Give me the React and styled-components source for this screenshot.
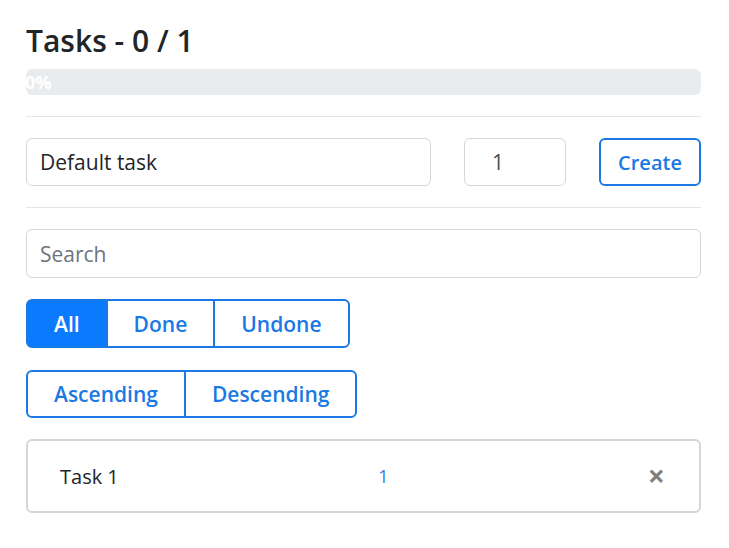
import React from "react";
import styled, { createGlobalStyle } from "styled-components";

const Global = createGlobalStyle`
  html, body { margin: 0; padding: 0; background: #fff; }
  body { font-family: "Open Sans", "Noto Sans", sans-serif; color: #212529; }
  * { box-sizing: border-box; }
`;

const Page = styled.div`
  width: 729px;
  padding: 23px 0 0 26px;
`;

const Container = styled.div`
  width: 675px;
  display: flex;
  flex-direction: column;
`;

const Title = styled.h3`
  margin: 0 0 10px;
  font-size: 30px;
  line-height: 36px;
  font-weight: 600;
  color: #212529;
`;

const Progress = styled.div`
  height: 26px;
  border-radius: 6px;
  background: #e9ecef;
  display: flex;
  align-items: center;
  overflow: hidden;
`;

const ProgressLabel = styled.span`
  color: #fff;
  font-size: 18px;
  font-weight: 700;
  line-height: 1;
  margin-left: -1px;
`;

const Rule = styled.hr`
  margin: 21px 0;
  border: 0;
  border-top: 1px solid #e2e4e7;
  height: 0;
  width: 100%;
`;

const Row = styled.div`
  display: flex;
  gap: 33px;
`;

const Input = styled.input`
  display: block;
  height: ${(p) => p.$h || 48}px;
  flex: none;
  width: ${(p) => p.$w || "100%"};
  border: 1px solid #d3d7db;
  border-radius: 6px;
  padding: 0 ${(p) => p.$px || 13}px;
  font-family: inherit;
  font-size: 21px;
  color: ${(p) => (p.$muted ? "#495057" : "#212529")};
  background: #fff;
  outline: none;
  &::placeholder { color: #6c757d; }
  -moz-appearance: textfield;
  &::-webkit-inner-spin-button, &::-webkit-outer-spin-button { -webkit-appearance: none; margin: 0; }
`;

const Button = styled.button`
  height: 48px;
  width: ${(p) => p.$w || "auto"};
  border: 2px solid #1b79e3;
  border-radius: 6px;
  background: #fff;
  color: #1b79e3;
  font-family: inherit;
  font-size: 20px;
  font-weight: 600;
  padding: 0;
`;

const Group = styled.div`
  display: flex;
  margin-top: ${(p) => p.$mt || 0}px;
  height: ${(p) => p.$h || 49}px;
  align-self: flex-start;
`;

const GroupButton = styled.button`
  height: 100%;
  padding: 0 26px;
  border: 2px solid #1b79e3;
  background: ${(p) => (p.$active ? "#0a7bff" : "#fff")};
  color: ${(p) => (p.$active ? "#fff" : "#1b79e3")};
  font-family: inherit;
  font-size: 21px;
  font-weight: 600;
  margin-left: -2px;
  &:first-child { margin-left: 0; border-radius: 6px 0 0 6px; }
  &:last-child { border-radius: 0 6px 6px 0; }
`;

const ListItem = styled.div`
  margin-top: 21px;
  height: 74px;
  border: 2px solid #d3d6da;
  border-radius: 6px;
  display: flex;
  align-items: center;
  justify-content: space-between;
  padding: 0 34px 0 32px;
`;

const TaskName = styled.span`
  font-size: 20px;
  font-weight: 500;
  color: #212529;
`;

const TaskCount = styled.span`
  font-size: 18px;
  color: #2f7fdc;
`;

const Close = styled.span`
  font-size: 30px;
  font-weight: 700;
  line-height: 1;
  color: rgba(0, 0, 0, 0.5);
`;

export default function App() {
  return (
    <Page>
      <Global />
      <Container>
        <Title>Tasks - 0 / 1</Title>
        <Progress>
          <ProgressLabel>0%</ProgressLabel>
        </Progress>
        <Rule />
        <Row>
          <Input $w="405px" defaultValue="Default task" />
          <Input $w="102px" $px={27} $muted type="number" defaultValue="1" />
          <Button $w="102px">Create</Button>
        </Row>
        <Rule />
        <Input $h={49} placeholder="Search" />
        <Group $mt={21} $h={49}>
          <GroupButton $active>All</GroupButton>
          <GroupButton>Done</GroupButton>
          <GroupButton>Undone</GroupButton>
        </Group>
        <Group $mt={22} $h={48}>
          <GroupButton>Ascending</GroupButton>
          <GroupButton>Descending</GroupButton>
        </Group>
        <ListItem>
          <TaskName>Task 1</TaskName>
          <TaskCount>1</TaskCount>
          <Close>×</Close>
        </ListItem>
      </Container>
    </Page>
  );
}
